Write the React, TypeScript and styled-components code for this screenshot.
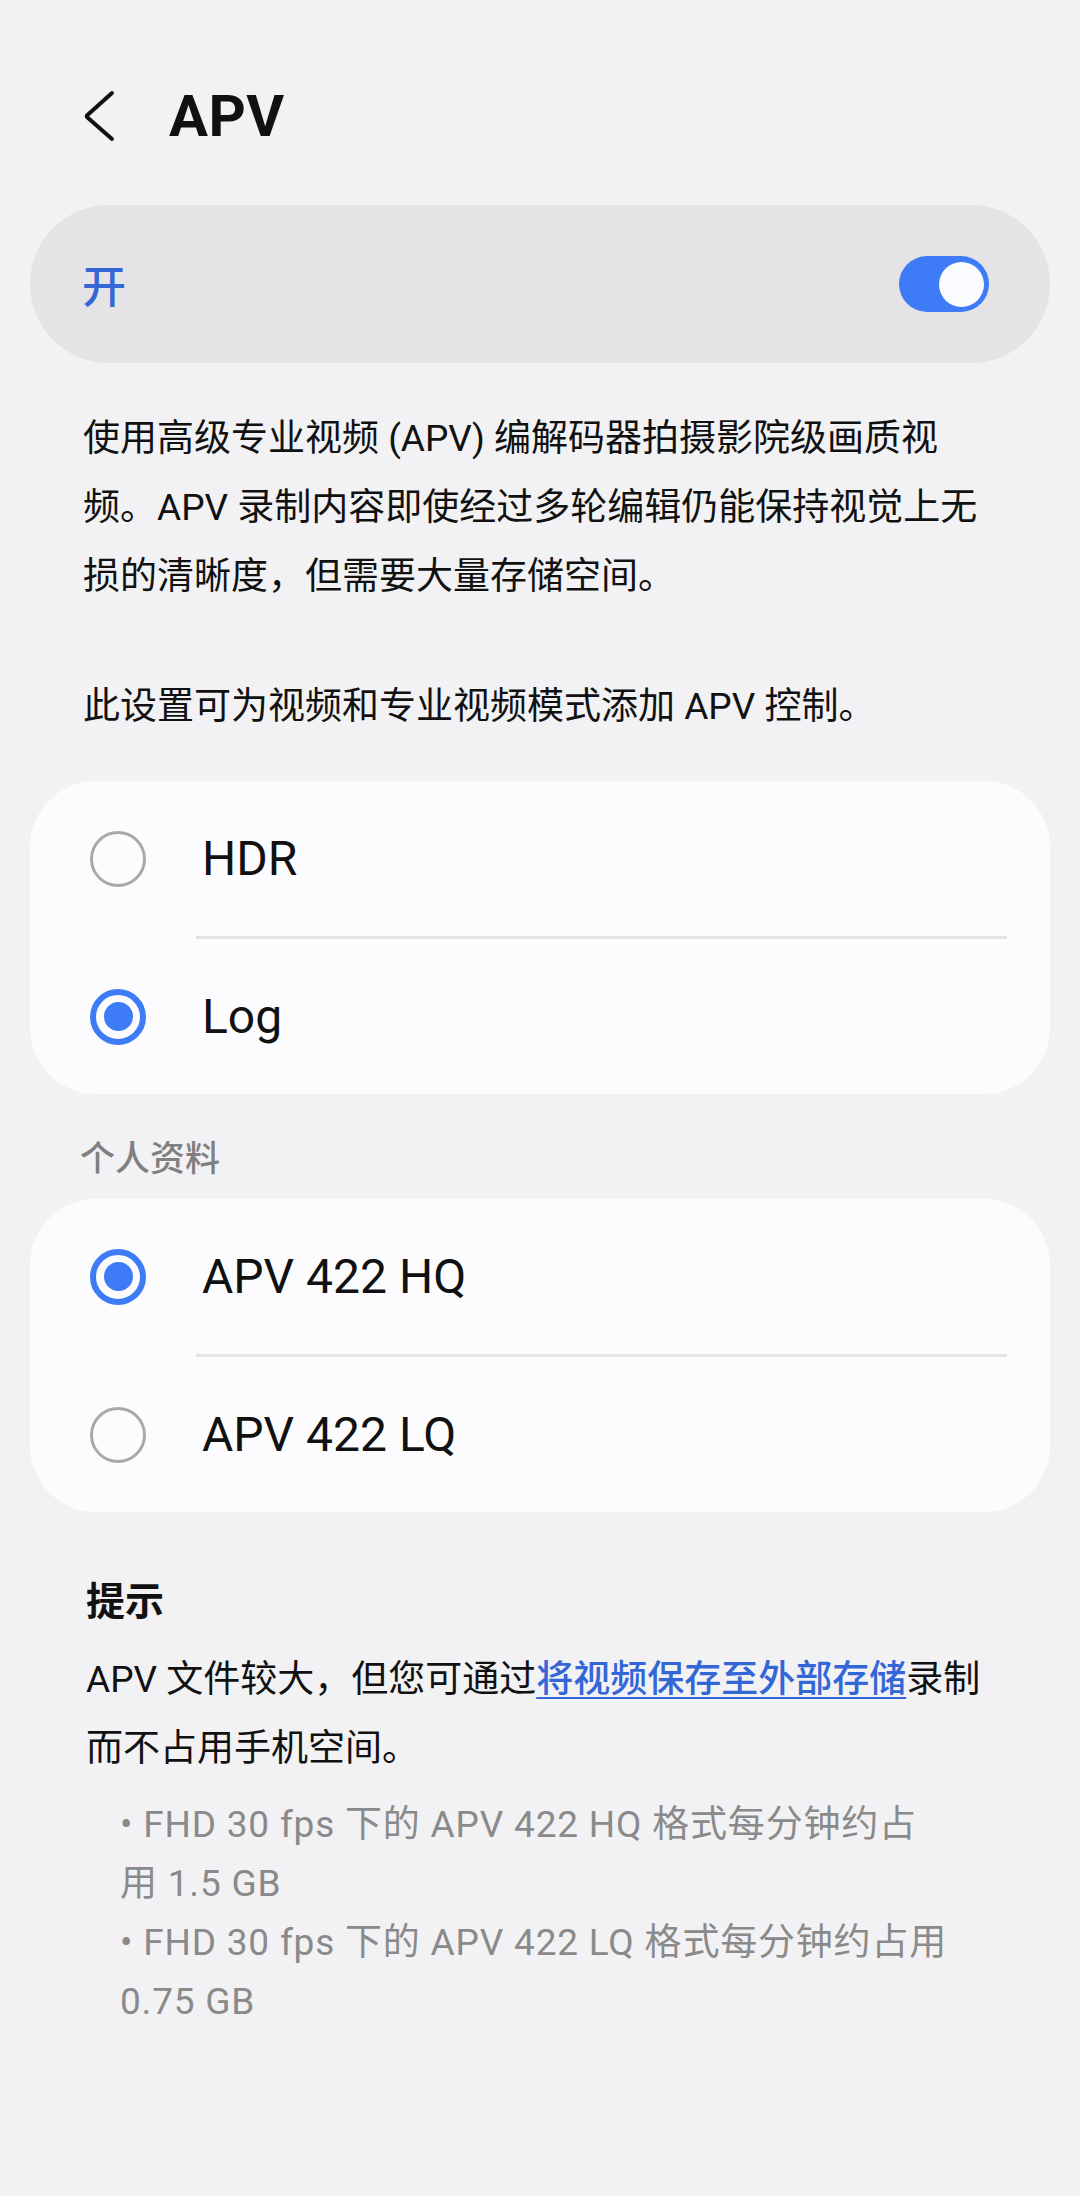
import styled, { createGlobalStyle } from 'styled-components'

const GlobalStyle = createGlobalStyle`
  body {
    margin: 0;
    background: #f2f2f4;
    font-family: Roboto, "Noto Sans CJK SC", sans-serif;
    color: #111111;
  }
`

const Page = styled.div`
  min-height: 2196px;
  padding-top: 60px;
  box-sizing: border-box;
`

const Header = styled.header`
  display: flex;
  align-items: center;
  height: 112px;
  padding-left: 84px;
  gap: 53px;
`

const BackButton = styled.button`
  display: flex;
  align-items: center;
  justify-content: center;
  width: 32px;
  height: 56px;
  padding: 0;
  border: 0;
  background: none;
  color: #111111;
`

const Title = styled.h1`
  margin: 0;
  font-size: 58px;
  font-weight: 700;
  letter-spacing: 0.5px;
`

const SwitchCard = styled.div`
  display: flex;
  align-items: center;
  justify-content: space-between;
  height: 158px;
  margin: 33px 30px 0;
  padding: 0 61px 0 52px;
  box-sizing: border-box;
  border-radius: 79px;
  background: #e4e4e7;
`

const SwitchLabel = styled.span`
  font-size: 44px;
  font-weight: 500;
  color: #3568d6;
`

const Toggle = styled.div<{ $on: boolean }>`
  display: flex;
  align-items: center;
  justify-content: ${(p) => (p.$on ? 'flex-end' : 'flex-start')};
  width: 90px;
  height: 56px;
  padding: 0 5px;
  box-sizing: border-box;
  border-radius: 28px;
  background: ${(p) => (p.$on ? '#3e7cf7' : '#b9b9bd')};
`

const Thumb = styled.span`
  width: 45px;
  height: 45px;
  border-radius: 50%;
  background: #f9fbff;
`

const Description = styled.div`
  width: 907px;
  margin: 41px 0 0 83px;
`

const Paragraph = styled.p`
  margin: 0;
  font-size: 37px;
  line-height: 69px;

  & + & {
    margin-top: 61px;
  }
`

const Card = styled.div<{ $top: number }>`
  margin: ${(p) => p.$top}px 30px 0;
  border-radius: 66px;
  background: #fcfcfe;
  overflow: hidden;
`

const OptionRow = styled.div`
  display: flex;
  align-items: center;
  gap: 56px;
  height: 155px;
  padding-left: 60px;
`

const Radio = styled.span<{ $checked: boolean }>`
  display: flex;
  align-items: center;
  justify-content: center;
  flex: none;
  width: 56px;
  height: 56px;
  box-sizing: border-box;
  border-radius: 50%;
  border: ${(p) => (p.$checked ? '6px solid #3e7cf7' : '3.5px solid #a9a9a9')};

  &::after {
    content: '';
    display: ${(p) => (p.$checked ? 'block' : 'none')};
    width: 29px;
    height: 29px;
    border-radius: 50%;
    background: #3e7cf7;
  }
`

const OptionLabel = styled.span`
  font-size: 48px;
  color: #111111;
`

const Divider = styled.div`
  height: 3px;
  margin: 0 43px 0 166px;
  background: #e4e4e6;
`

const SectionLabel = styled.div`
  margin: 42px 0 0 80px;
  font-size: 35px;
  line-height: 48px;
  font-weight: 500;
  color: #808080;
`

const Tips = styled.section`
  width: 904px;
  margin: 60px 0 0 86px;
`

const TipsTitle = styled.h2`
  margin: 0;
  font-size: 39px;
  line-height: 60px;
  font-weight: 700;
`

const TipsText = styled.p`
  margin: 13px 0 0;
  font-size: 37px;
  line-height: 69px;
`

const Link = styled.a`
  color: #3366d6;
  font-weight: 500;
  text-decoration: underline;
  text-decoration-thickness: 2px;
  text-underline-offset: 5px;
`

const BulletList = styled.ul`
  margin: 12px 0 0 34px;
  padding: 0;
  list-style: none;
  font-size: 37px;
  line-height: 59px;
  letter-spacing: 0.8px;
  color: #8a8a8a;
`

type Option = { id: string; label: string }

const colorOptions: Option[] = [
  { id: 'hdr', label: 'HDR' },
  { id: 'log', label: 'Log' },
]

const profileOptions: Option[] = [
  { id: 'hq', label: 'APV 422 HQ' },
  { id: 'lq', label: 'APV 422 LQ' },
]

const OptionCard = ({ options, selected, top }: { options: Option[]; selected: string; top: number }) => (
  <Card $top={top}>
    {options.map((option, i) => (
      <div key={option.id}>
        {i > 0 && <Divider />}
        <OptionRow>
          <Radio $checked={option.id === selected} />
          <OptionLabel>{option.label}</OptionLabel>
        </OptionRow>
      </div>
    ))}
  </Card>
)

export default function App() {
  return (
    <Page>
      <GlobalStyle />
      <Header>
        <BackButton aria-label="返回">
          <svg width="32" height="56" viewBox="0 0 32 56" fill="none">
            <path
              d="M28 5 L3.5 27 Q2 28 3.5 29.5 L28 51"
              stroke="currentColor"
              strokeWidth="4"
              strokeLinecap="round"
              strokeLinejoin="round"
            />
          </svg>
        </BackButton>
        <Title>APV</Title>
      </Header>

      <SwitchCard>
        <SwitchLabel>开</SwitchLabel>
        <Toggle $on>
          <Thumb />
        </Toggle>
      </SwitchCard>

      <Description>
        <Paragraph>
          使用高级专业视频 (APV) 编解码器拍摄影院级画质视频。APV 录制内容即使经过多轮编辑仍能保持视觉上无损的清晰度，但需要大量存储空间。
        </Paragraph>
        <Paragraph>此设置可为视频和专业视频模式添加 APV 控制。</Paragraph>
      </Description>

      <OptionCard options={colorOptions} selected="log" top={40} />

      <SectionLabel>个人资料</SectionLabel>
      <OptionCard options={profileOptions} selected="hq" top={15} />

      <Tips>
        <TipsTitle>提示</TipsTitle>
        <TipsText>
          APV 文件较大，但您可通过<Link href="#">将视频保存至外部存储</Link>录制而不占用手机空间。
        </TipsText>
        <BulletList>
          <li>
            • FHD 30 fps 下的 APV 422 HQ 格式每分钟约占
            <br />
            用 1.5 GB
          </li>
          <li>
            • FHD 30 fps 下的 APV 422 LQ 格式每分钟约占用
            <br />
            0.75 GB
          </li>
        </BulletList>
      </Tips>
    </Page>
  )
}
